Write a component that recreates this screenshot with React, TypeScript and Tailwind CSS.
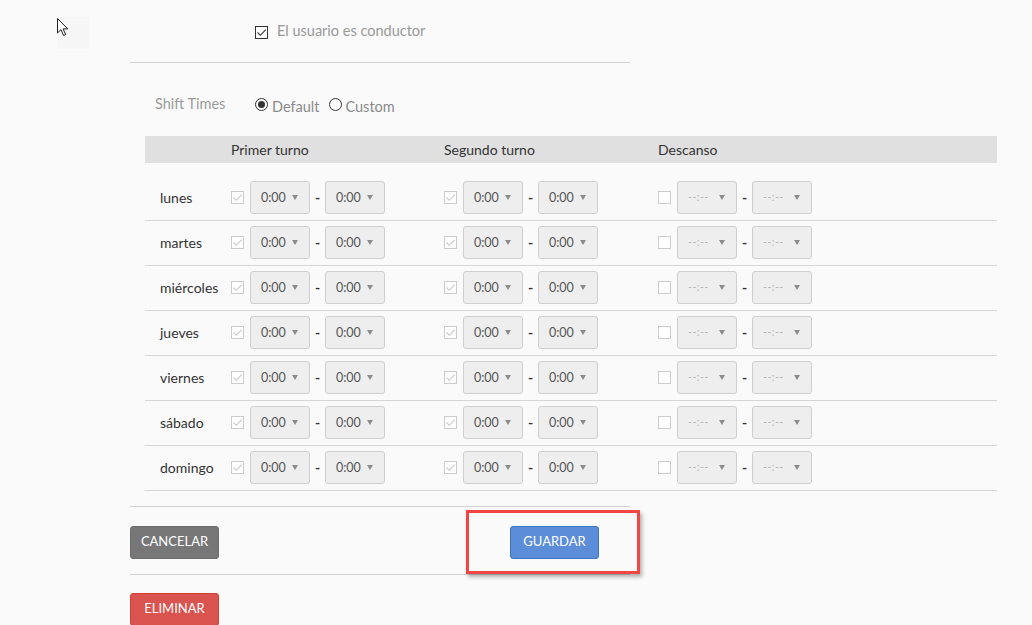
import React from "react";

const DAYS = ["lunes", "martes", "miércoles", "jueves", "viernes", "sábado", "domingo"];

function Check({ on, dim }: { on?: boolean; dim?: boolean }) {
  return (
    <span
      className={
        "inline-flex h-[13px] w-[13px] shrink-0 items-center justify-center border bg-white " +
        (dim ? "border-[#cccccc]" : "border-[#333333]")
      }
    >
      {on && (
        <svg width="11" height="11" viewBox="0 0 11 11">
          <path d="M1.5 5.5 L4.3 8.3 L9.8 2.6" fill="none" stroke={dim ? "#c8c8c8" : "#333"} strokeWidth="1.1" />
        </svg>
      )}
    </span>
  );
}

function TimeSelect({ value, off }: { value: string; off?: boolean }) {
  return (
    <div className="flex h-[33px] w-[60px] shrink-0 items-center justify-between rounded-[3px] border border-[#cfcfcf] bg-[#eeeeee] pl-[10px] pr-[11px]">
      <span className={off ? "text-[10.5px] tracking-[0.5px] text-[#b5b5b5]" : "translate-y-[1px] text-[12.5px] text-[#555555]"}>{value}</span>
      <svg width="6" height="5" viewBox="0 0 6 5">
        <path d="M0 0 H6 L3 5 Z" fill="#8c8c8c" />
      </svg>
    </div>
  );
}

function Group({ on }: { on: boolean }) {
  const v = on ? "0:00" : "--:--";
  return (
    <div className="flex items-center">
      <Check on={on} dim />
      <div className="ml-[6px]">
        <TimeSelect value={v} off={!on} />
      </div>
      <span className="w-[15px] text-center text-[14px] font-bold text-[#333333]">-</span>
      <TimeSelect value={v} off={!on} />
    </div>
  );
}

export default function App() {
  return (
    <div className="relative min-h-[625px] bg-[#fafafa] pb-10 font-['Lato','Liberation_Sans',sans-serif] text-[14px]">
      {/* cursor */}
      <div className="absolute left-[57px] top-[17px] h-[32px] w-[32px] bg-[#f6f6f6]">
        <svg width="12" height="19" viewBox="0 0 12 19" className="mt-[1px]">
          <path d="M0.5 0.5 L0.5 15 L4 11.6 L6.6 17.5 L8.6 16.6 L6.1 10.9 L10.8 10.9 Z" fill="white" stroke="#222" strokeWidth="1" />
        </svg>
      </div>

      <div className="ml-[130px] pt-[22px]">
        <div className="w-[500px]">
          <div className="flex items-center pl-[125px]">
            <Check on />
            <span className="ml-[9px] -translate-y-[2px] text-[14.5px] text-[#999999]">El usuario es conductor</span>
          </div>
          <div className="mt-[18px] h-px bg-[#d2d2d2]" />
        </div>

        <div className="mt-[31px] flex items-center pl-[25px]">
          <span className="w-[100px] -translate-y-[1px] text-[14.5px] text-[#9a9a9a]">Shift Times</span>
          <span className="inline-flex h-[13px] w-[13px] items-center justify-center rounded-full border border-[#333] bg-white">
            <span className="h-[7px] w-[7px] rounded-full bg-[#333]" />
          </span>
          <span className="ml-[4px] translate-y-[2px] text-[14.5px] text-[#8a8a8a]">Default</span>
          <span className="ml-[10px] inline-flex h-[13px] w-[13px] rounded-full border border-[#333] bg-white" />
          <span className="ml-[3px] translate-y-[2px] text-[14.5px] text-[#8a8a8a]">Custom</span>
        </div>

        <div className="ml-[15px] mt-[20px] w-[852px]">
          <div className="grid h-[27px] grid-cols-[86px_213px_214px_1fr] items-center bg-[#e0e0e0] text-[14px] text-[#333333]">
            <span />
            <span>Primer turno</span>
            <span>Segundo turno</span>
            <span>Descanso</span>
          </div>
          <div className="pt-[13px]">
            {DAYS.map((d) => (
              <div key={d} className="grid h-[45px] grid-cols-[86px_213px_214px_1fr] items-center border-b border-[#d6d6d6]">
                <span className="pl-[15px] text-[14px] text-[#333333]">{d}</span>
                <Group on />
                <Group on />
                <Group on={false} />
              </div>
            ))}
          </div>
        </div>

        <div className="w-[500px]">
          <div className="mt-[15px] h-px bg-[#d2d2d2]" />
          <div className="flex items-center pb-[15px] pt-[19px]">
            <button className="h-[33px] w-[89px] rounded-[3px] border border-[#6c6c6c] bg-[#777777] text-[13px] text-white">
              CANCELAR
            </button>
            <div className="relative ml-[291px]">
              <button className="h-[33px] w-[89px] rounded-[3px] border border-[#3f74c2] bg-[#5b8dd9] text-[13px] text-white">
                GUARDAR
              </button>
              <div className="pointer-events-none absolute -left-[44px] -right-[41px] -top-[16px] -bottom-[15px] border-[3px] border-[#f04646] shadow-[2px_3px_4px_rgba(0,0,0,0.3)]" />
            </div>
          </div>
          <div className="h-px bg-[#d2d2d2]" />
          <button className="mt-[18px] h-[33px] w-[89px] rounded-[3px] border border-[#d43f3a] bg-[#d9534f] text-[13px] text-white">
            ELIMINAR
          </button>
        </div>
      </div>
    </div>
  );
}
